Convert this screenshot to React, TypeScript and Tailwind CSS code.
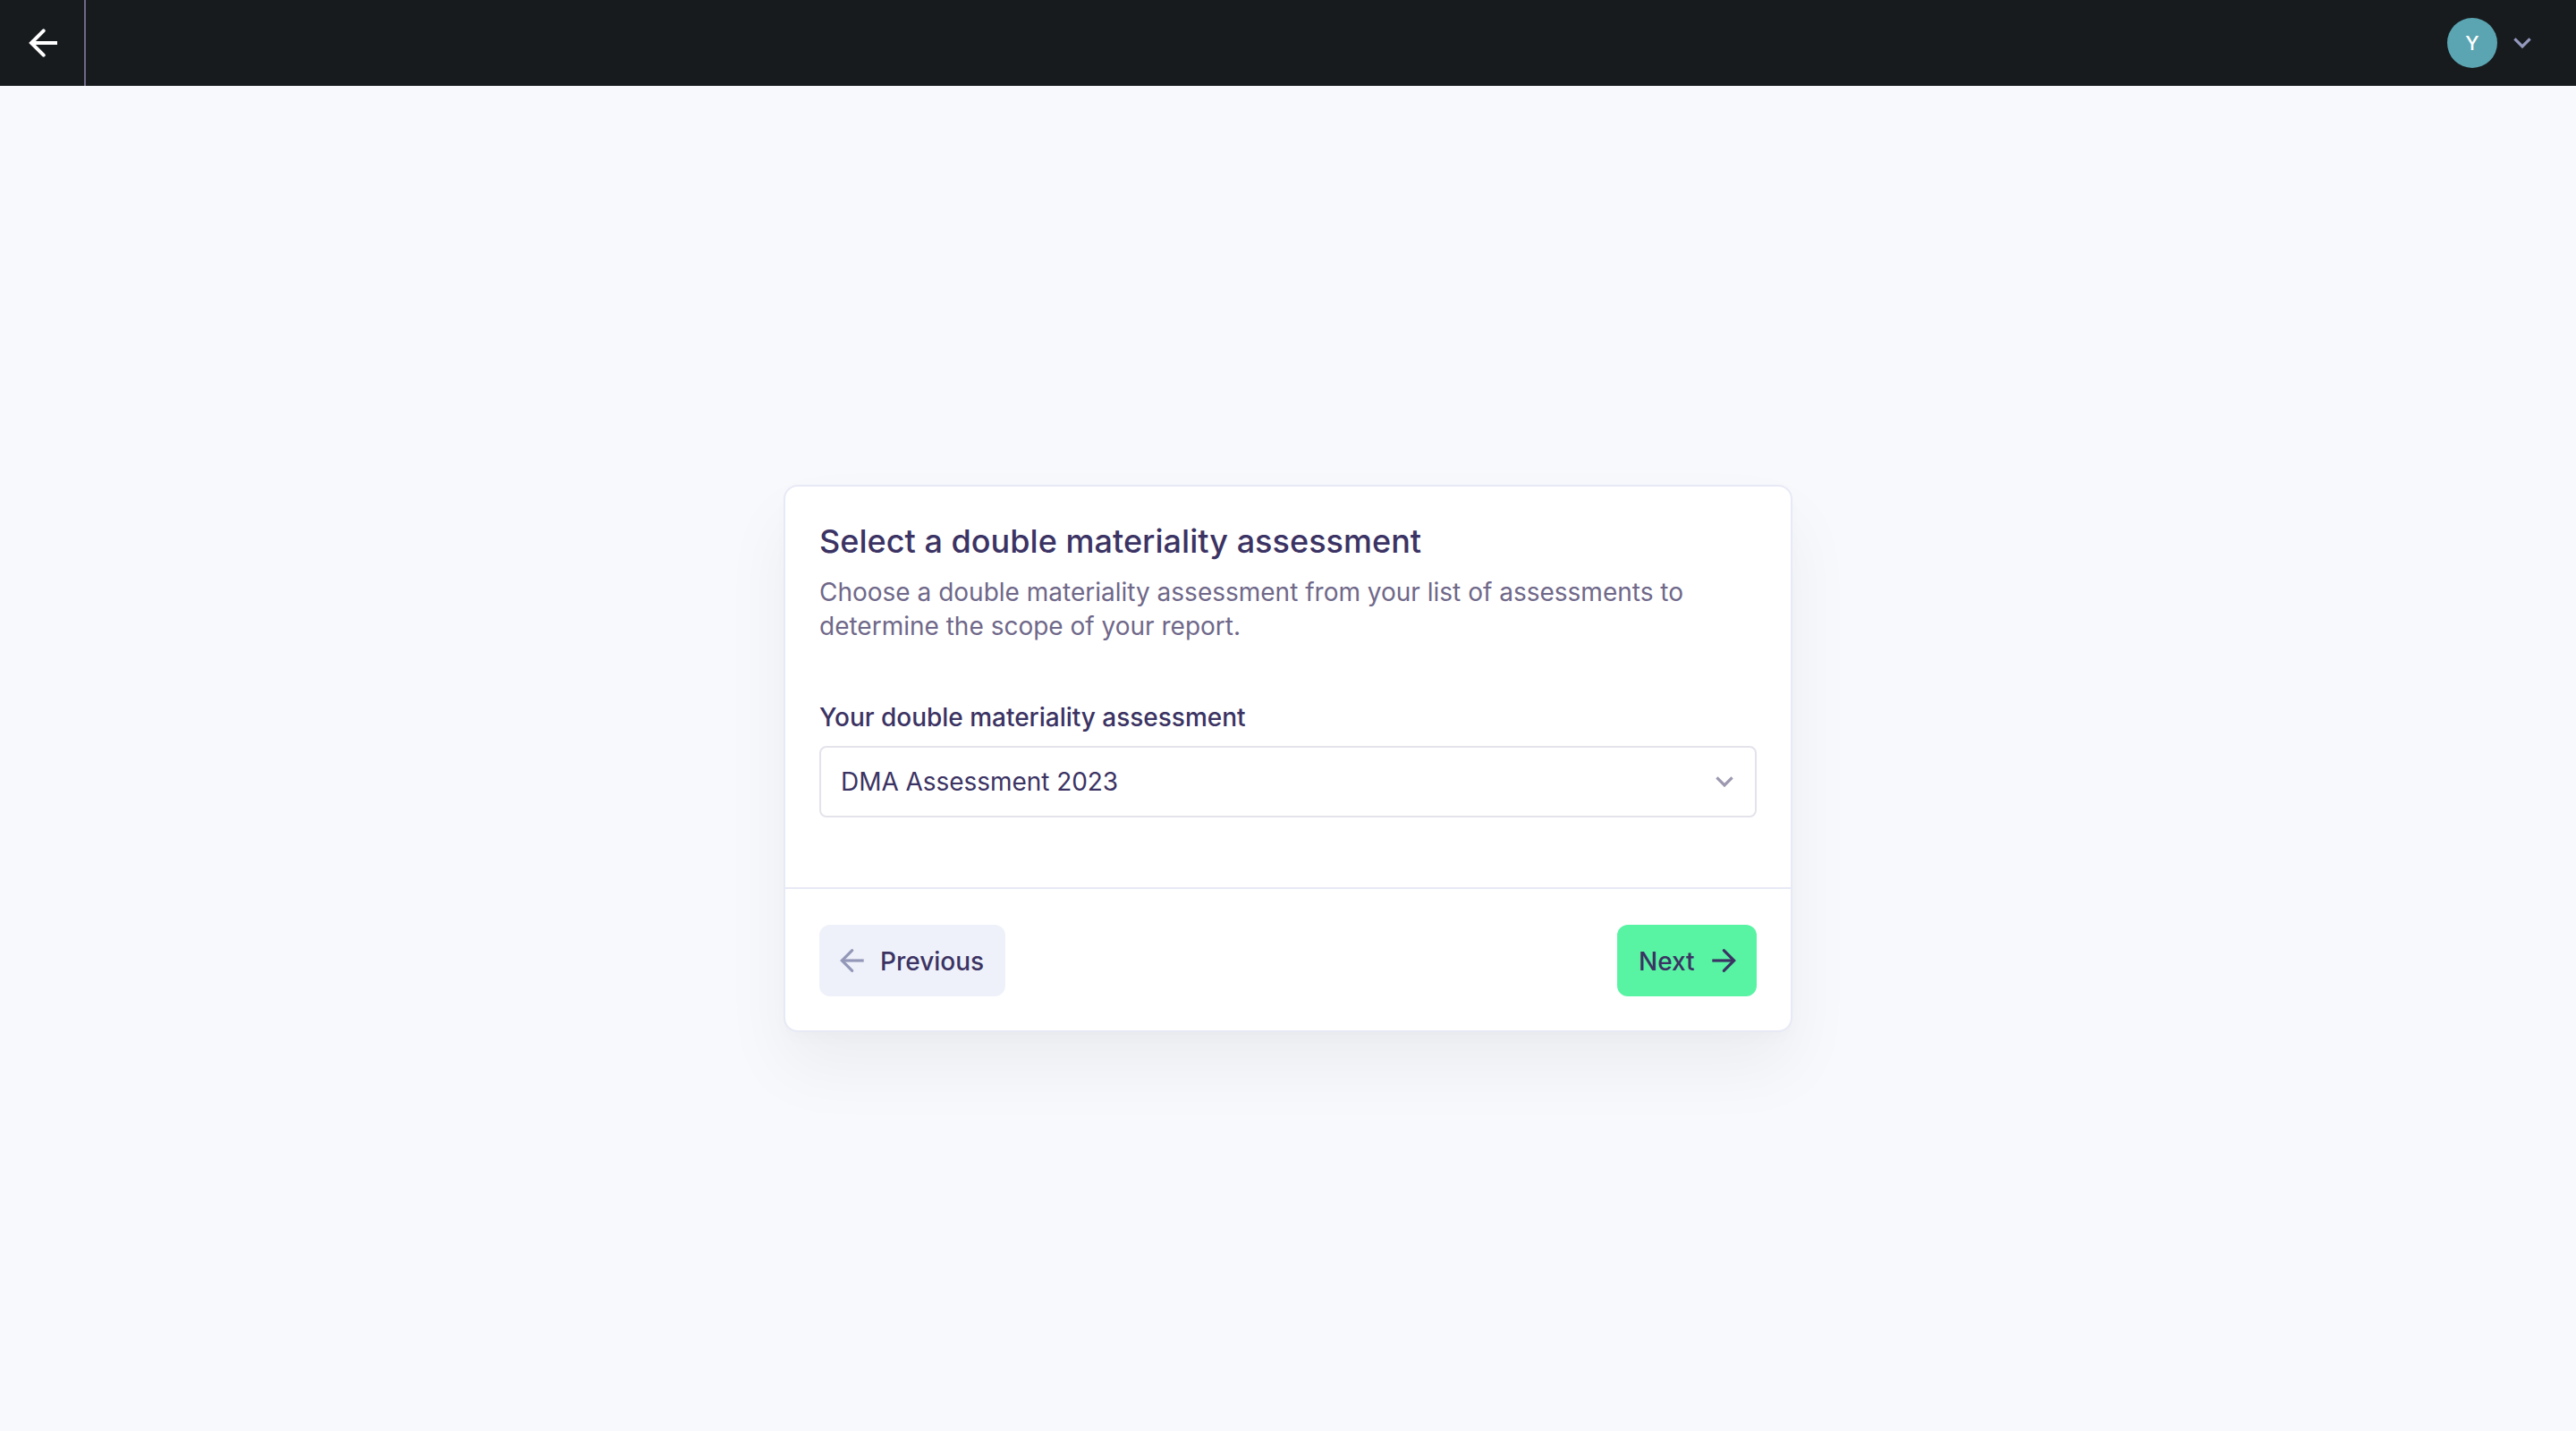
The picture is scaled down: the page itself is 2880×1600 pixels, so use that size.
import React from "react";

function ChevronDown({ className }: { className: string }) {
  return (
    <svg viewBox="0 0 20 12" className={className} fill="none" stroke="currentColor" strokeWidth="3.2">
      <path d="M1.4 1.4 L10 10 L18.6 1.4" />
    </svg>
  );
}

function BackArrow() {
  return (
    <svg viewBox="0 0 32 32" className="h-8 w-8 text-white" fill="none" stroke="currentColor" strokeWidth="4">
      <path d="M16.7 2.3 L3 16 L16.7 29.7" strokeLinecap="round" />
      <path d="M3 16 H32" />
    </svg>
  );
}

function SmallArrow({ className }: { className: string }) {
  return (
    <svg viewBox="0 0 28 28" className={className} fill="none" stroke="currentColor" strokeWidth="3.2">
      <path d="M14.7 2.6 L3.3 14 L14.7 25.4" strokeLinecap="round" />
      <path d="M3.3 14 H27.7" />
    </svg>
  );
}

export default function App() {
  return (
    <div className="flex h-[1600px] w-[2880px] flex-col bg-[#f8f9fd] font-['Inter',sans-serif] text-[#3b3363]">
      <header className="flex h-24 shrink-0 items-center justify-between bg-[#171b1e]">
        <button aria-label="Back" className="flex h-24 w-24 items-center border-r-2 border-[#6f6889] pl-8">
          <BackArrow />
        </button>
        <div className="flex items-center gap-[18px] pr-[50px]">
          <div className="flex h-14 w-14 items-center justify-center rounded-full bg-[#5ba5b2] text-[22px] font-medium text-white">
            Y
          </div>
          <ChevronDown className="h-3 w-5 overflow-visible text-[#9498bd]" />
        </div>
      </header>
      <main className="flex flex-1 items-center justify-center">
        <section className="h-[612px] w-[1128px] rounded-2xl border-2 border-[#e7e9f5] bg-white shadow-[0_40px_76px_rgba(0,0,0,0.05),0_8px_16px_rgba(0,0,0,0.015)]">
          <div className="h-[448px] px-[38px] pt-[38px]">
            <h1 className="text-[36px] leading-[46px] font-medium tracking-[0.03px]">
              Select a double materiality assessment
            </h1>
            <p className="mt-[15px] w-[1000px] text-[28px] leading-[38px] text-[#6f6889]">
              Choose a double materiality assessment from your list of assessments to determine the scope of your report.
            </p>
            <div className="mt-[63px] text-[28px] leading-[40px] font-medium tracking-[-0.02px]">
              Your double materiality assessment
            </div>
            <div className="mt-3 flex h-20 items-center justify-between rounded-lg border-2 border-[#e4e3eb] pr-6 pl-[22px] text-[28px]">
              <span className="tracking-[-0.05px]">DMA Assessment 2023</span>
              <ChevronDown className="h-3 w-5 overflow-visible text-[#9d98b0]" />
            </div>
          </div>
          <div className="flex justify-between border-t-2 border-[#e7e9f5] px-[38px] pt-10">
            <button className="flex h-20 w-52 items-center gap-[18px] rounded-xl bg-[#eef1f9] pl-[22px] text-[28px] font-medium">
              <SmallArrow className="h-7 w-7 text-[#9498b8]" />
              <span className="mt-0.5">Previous</span>
            </button>
            <button className="flex h-20 w-[156px] items-center justify-between rounded-xl bg-[#58f4a3] pr-[22px] pl-6 text-[28px] font-medium">
              <span className="mt-0.5">Next</span>
              <SmallArrow className="h-7 w-7 rotate-180" />
            </button>
          </div>
        </section>
      </main>
    </div>
  );
}
